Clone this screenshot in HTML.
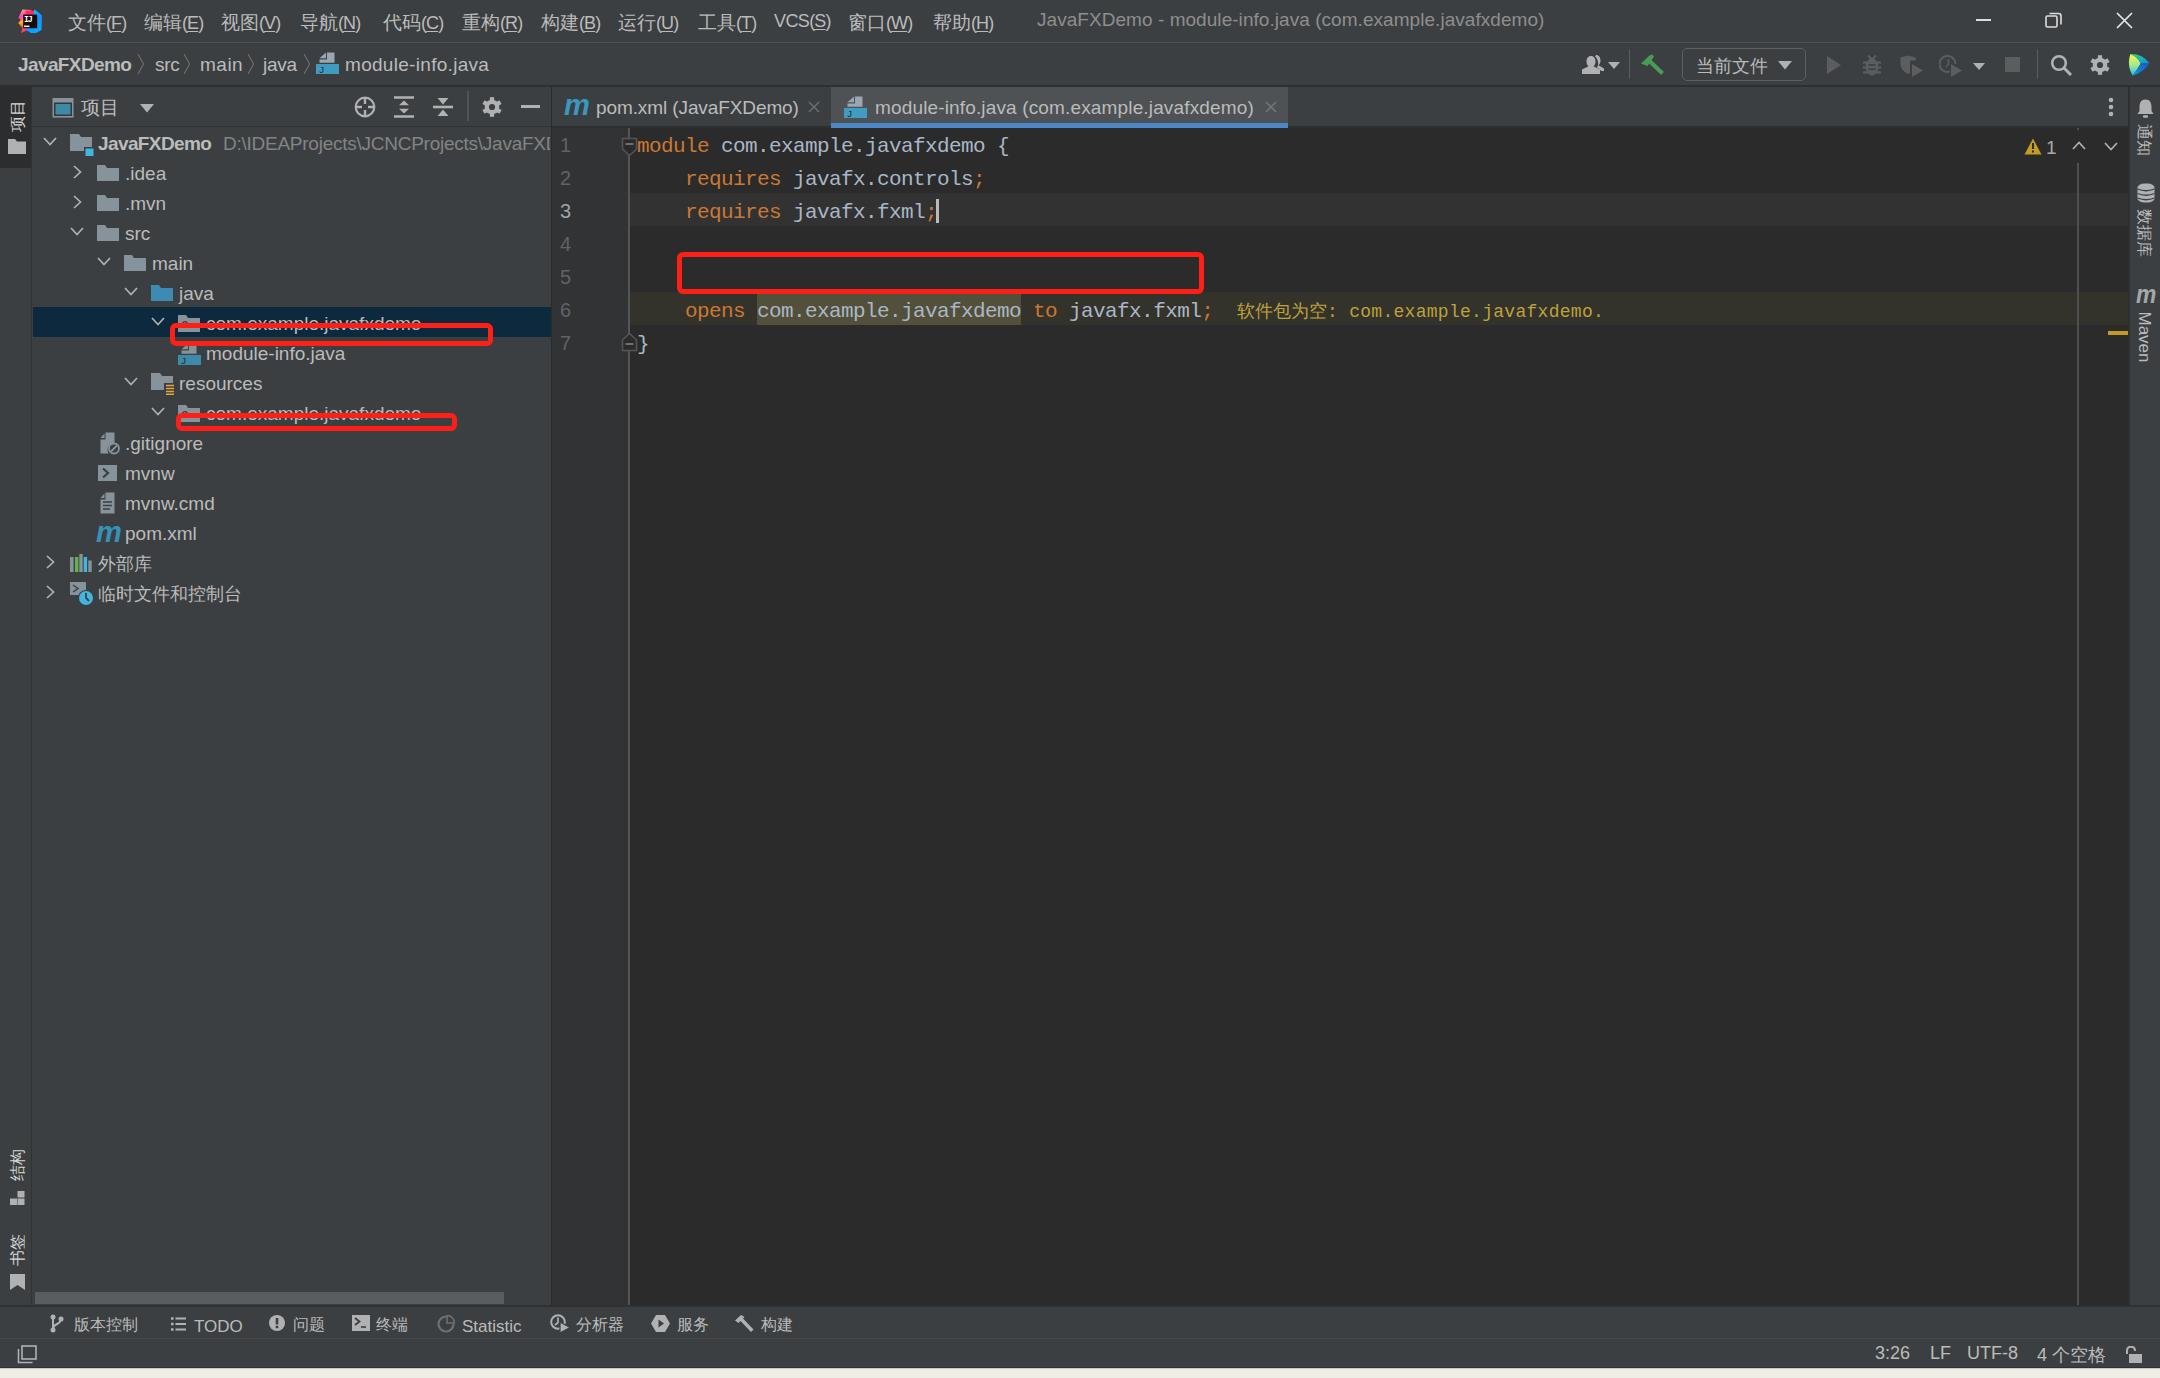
<!DOCTYPE html>
<html><head><meta charset="utf-8">
<style>
*{box-sizing:border-box;margin:0;padding:0}
html,body{width:2160px;height:1378px;overflow:hidden;background:#3c3f41;font-family:"Liberation Sans",sans-serif;color:#bbbbbb}
.a{position:absolute;white-space:nowrap}
svg{display:block}
.mono{font-family:"Liberation Mono",monospace}
#menubar{left:0;top:0;width:2160px;height:43px;background:#3c3f41;border-bottom:1px solid #515151}
#navbar{left:0;top:43px;width:2160px;height:42px;background:#3c3f41}
#sep1{left:0;top:85px;width:2160px;height:2px;background:#2e2f30;z-index:2}
#lstrip{left:0;top:86px;width:32px;height:1219px;background:#3c3f41;border-right:1px solid #323232}
#proj{left:32px;top:86px;width:519px;height:1219px;background:#3c3f41}
#vsep{left:551px;top:86px;width:1px;height:1219px;background:#2b2b2b}
#tabs{left:552px;top:86px;width:1576px;height:42px;background:#3c3f41;border-bottom:2px solid #2e2f30}
#gutter{left:552px;top:128px;width:78px;height:1177px;background:#313335}
#editor{left:630px;top:128px;width:1498px;height:1177px;background:#2b2b2b}
#rstrip{left:2128px;top:86px;width:32px;height:1219px;background:#3c3f41;border-left:2px solid #2e2f30}
#btbar{left:0;top:1305px;width:2160px;height:34px;background:#3c3f41;border-top:2px solid #303132;border-bottom:1px solid #46484a}
#status{left:0;top:1339px;width:2160px;height:29px;background:#3c3f41}
#beige{left:0;top:1367px;width:2160px;height:11px;background:#efeee5;border-top:1px solid #2e3031;box-shadow:inset 0 1px 0 #c9c8c0}
.menu span{position:absolute;top:10px;font-size:19px;color:#bbbbbb;white-space:nowrap}
.menu i{font-style:normal;letter-spacing:-0.9px;font-size:18px}
.menu u{text-decoration:underline;text-underline-offset:2px}
.tt{font-size:19px;color:#bbbbbb;line-height:22px;margin-top:1px}
.tab{font-size:19px;color:#bbbbbb;letter-spacing:-0.35px}
.ln{left:530px;width:41px;text-align:right;font-family:"Liberation Sans",sans-serif;font-size:20px;line-height:33px;color:#606366;margin-top:1px}
.code{margin-top:2px;left:637px;font-family:"Liberation Mono",monospace;font-size:21px;letter-spacing:-0.6px;line-height:33px;color:#a9b7c6;white-space:pre}
.kw{color:#cc7832}
.red{border:5px solid #fe1f17;border-radius:6px}
.vl span,.vr span{position:absolute;font-size:16px;color:#bbbbbb;white-space:nowrap;line-height:18px}
.vl span{transform:rotate(-90deg);color:#d6d6d6}
.vr span{transform:rotate(90deg)}
.bt{top:1315px;font-size:16px;color:#bbbbbb}
.st{top:1343px;font-size:18px;color:#bbbbbb}
</style></head><body>
<div id="menubar" class="a"></div>
<div id="navbar" class="a"></div>
<div id="sep1" class="a"></div>
<div id="lstrip" class="a"></div>
<div id="proj" class="a"></div>
<div id="vsep" class="a"></div>
<div id="tabs" class="a"></div>
<div id="gutter" class="a"></div>
<div id="editor" class="a"></div>
<div id="rstrip" class="a"></div>
<div id="btbar" class="a"></div>
<div id="status" class="a"></div>
<div id="beige" class="a"></div>
<!-- MENU BAR -->
<svg class="a" style="left:18px;top:9px" width="25" height="25" viewBox="0 0 25 25"><defs>
<linearGradient id="ijl" x1="0" y1="0" x2="0.3" y2="1"><stop offset="0" stop-color="#fdd03b"/><stop offset="0.35" stop-color="#ff3ec8"/><stop offset="0.55" stop-color="#ffb800"/><stop offset="0.75" stop-color="#ff5a3c"/><stop offset="1" stop-color="#ff2a8c"/></linearGradient>
<linearGradient id="ijr" x1="0" y1="0" x2="0.4" y2="1"><stop offset="0" stop-color="#00d8ff"/><stop offset="0.6" stop-color="#1a8cff"/><stop offset="1" stop-color="#08a6ff"/></linearGradient></defs>
<path d="M4.5 0.5 L13 1 L15 8 L10 21 L3 24 L4.5 19 L0.3 14 L3 10.5 L0.3 9 Z" fill="url(#ijl)"/>
<path d="M7.5 1.5 L16 1.8 L18 7 L8 8 Z" fill="#ff2a6a"/>
<path d="M16.5 0.2 L24 6.5 L23.5 21 L18 24 L13 24 L8 21 L15 7 Z" fill="url(#ijr)"/>
<rect x="5.2" y="5.4" width="14" height="13.8" rx="0.5" fill="#160b0b"/>
<text x="6" y="12.6" font-family="Liberation Mono" font-weight="bold" font-size="8.2" fill="#ffffff" letter-spacing="-1.2">IJ</text>
<rect x="6" y="16.5" width="5.5" height="1.6" fill="#e8e8e8"/></svg>
<div class="a menu">
<span style="left:68px">文件<i>(<u>F</u>)</i></span>
<span style="left:144px">编辑<i>(<u>E</u>)</i></span>
<span style="left:221px">视图<i>(<u>V</u>)</i></span>
<span style="left:300px">导航<i>(<u>N</u>)</i></span>
<span style="left:383px">代码<i>(<u>C</u>)</i></span>
<span style="left:462px">重构<i>(<u>R</u>)</i></span>
<span style="left:541px">构建<i>(<u>B</u>)</i></span>
<span style="left:618px">运行<i>(<u>U</u>)</i></span>
<span style="left:698px">工具<i>(<u>T</u>)</i></span>
<span style="left:774px;top:11px;font-size:18px;letter-spacing:-0.6px">VCS<i>(<u>S</u>)</i></span>
<span style="left:848px">窗口<i>(<u>W</u>)</i></span>
<span style="left:933px">帮助<i>(<u>H</u>)</i></span>
</div>
<div class="a" style="left:1037px;top:9px;font-size:19px;color:#8e8e8e;letter-spacing:0.05px">JavaFXDemo - module-info.java (com.example.javafxdemo)</div>
<!-- window controls -->
<div class="a" style="left:1976px;top:19px;width:15px;height:2px;background:#dcdcdc"></div>
<svg class="a" style="left:2045px;top:12px" width="18" height="17" viewBox="0 0 18 17"><rect x="1" y="4" width="11" height="11" rx="1.5" fill="none" stroke="#dcdcdc" stroke-width="1.6"/><path d="M4.5 1.5 H13.5 Q16 1.5 16 4 V12.5" fill="none" stroke="#dcdcdc" stroke-width="1.6"/></svg>
<svg class="a" style="left:2116px;top:12px" width="17" height="17" viewBox="0 0 17 17"><path d="M1 1 L16 16 M16 1 L1 16" stroke="#e6e6e6" stroke-width="1.7"/></svg>
<!-- NAV BAR / breadcrumbs -->
<div class="a" style="left:18px;top:54px;font-size:19px;font-weight:bold;color:#bbbbbb;letter-spacing:-0.6px">JavaFXDemo</div>
<svg class="a" style="left:137px;top:53px" width="8" height="22" viewBox="0 0 8 22"><path d="M1 1 L6.5 11 L1 21" fill="none" stroke="#6f6f6f" stroke-width="1.1"/></svg>
<div class="a" style="left:155px;top:54px;font-size:19px;color:#bbbbbb;letter-spacing:-0.3px">src</div>
<svg class="a" style="left:183px;top:53px" width="8" height="22" viewBox="0 0 8 22"><path d="M1 1 L6.5 11 L1 21" fill="none" stroke="#6f6f6f" stroke-width="1.1"/></svg>
<div class="a" style="left:200px;top:54px;font-size:19px;color:#bbbbbb;letter-spacing:0.5px">main</div>
<svg class="a" style="left:247px;top:53px" width="8" height="22" viewBox="0 0 8 22"><path d="M1 1 L6.5 11 L1 21" fill="none" stroke="#6f6f6f" stroke-width="1.1"/></svg>
<div class="a" style="left:263px;top:54px;font-size:19px;color:#bbbbbb;letter-spacing:-0.3px">java</div>
<svg class="a" style="left:303px;top:53px" width="8" height="22" viewBox="0 0 8 22"><path d="M1 1 L6.5 11 L1 21" fill="none" stroke="#6f6f6f" stroke-width="1.1"/></svg>
<svg class="a" style="left:315px;top:51px" width="24" height="24" viewBox="0 0 24 24"><path d="M12 1.4 H19.5 V11.8 H4.5 V8.5 H12 Z" fill="#9aa7b0"/><path d="M4.5 7.3 L11 1.6 V7.3 Z" fill="#9aa7b0"/><rect x="1" y="13" width="23" height="10" fill="#40a0c8" opacity="0.95"/><text x="4.2" y="21.8" font-family="Liberation Sans" font-size="9.5" fill="#1e2a30">J</text></svg>
<div class="a" style="left:345px;top:54px;font-size:19px;color:#bbbbbb;letter-spacing:0.3px">module-info.java</div>
<!-- toolbar right -->
<svg class="a" style="left:1581px;top:54px" width="24" height="21" viewBox="0 0 24 21"><path d="M10 2 C13 2 14.5 4.5 14.5 7.5 C14.5 10 13.5 11.5 12.5 12.3 L19 15.5 V20 H1 V15.5 L7.5 12.3 C6.5 11.5 5.5 10 5.5 7.5 C5.5 4.5 7 2 10 2 Z" fill="#afb1b3"/><path d="M15 1 C18 1 19.5 3.5 19.5 6.5 C19.5 9 18.5 10.5 17.5 11.3 L23 14.5 V17 H20.5 L16 13.5 C17 12 17.5 10.5 17 8 C16.5 5 15.5 3.5 14 2.5 Z" fill="#afb1b3"/></svg>
<svg class="a" style="left:1608px;top:62px" width="12" height="8" viewBox="0 0 12 8"><path d="M0 0 H12 L6 7 Z" fill="#afb1b3"/></svg>
<div class="a" style="left:1629px;top:49px;width:1px;height:30px;background:#5a5d5f"></div>
<svg class="a" style="left:1640px;top:54px" width="25" height="22" viewBox="0 0 25 22"><path d="M1 9.5 L9.5 1.5 L12.5 0.5 L14 2.5 L7.5 12 Z" fill="#499c54"/><path d="M9 6.5 L22.5 19.5" stroke="#499c54" stroke-width="4"/></svg>
<div class="a" style="left:1682px;top:48px;width:124px;height:33px;border:1.5px solid #5e6060;border-radius:5px;background:#3c3f41"></div>
<div class="a" style="left:1696px;top:54px;font-size:18px;color:#bbbbbb">当前文件</div>
<svg class="a" style="left:1778px;top:61px" width="14" height="9" viewBox="0 0 14 9"><path d="M0 0 H14 L7 8.5 Z" fill="#afb1b3"/></svg>
<svg class="a" style="left:1826px;top:56px" width="16" height="18" viewBox="0 0 16 18"><path d="M1 0 L15 9 L1 18 Z" fill="#5b5d5f"/></svg>
<svg class="a" style="left:1862px;top:54px" width="20" height="22" viewBox="0 0 20 22"><ellipse cx="10" cy="13" rx="6.5" ry="8.5" fill="#5b5d5f"/><rect x="1" y="7.5" width="18" height="2.2" fill="#5b5d5f"/><rect x="1" y="12.3" width="18" height="2.2" fill="#5b5d5f"/><rect x="1" y="17.3" width="18" height="2.2" fill="#5b5d5f"/><rect x="6.5" y="10.2" width="7" height="1.6" fill="#3c3f41"/><rect x="6.5" y="14.5" width="7" height="1.6" fill="#3c3f41"/><path d="M6 1.5 L10 5.5 L14 1.5" stroke="#5b5d5f" stroke-width="2" fill="none"/></svg>
<svg class="a" style="left:1900px;top:55px" width="24" height="23" viewBox="0 0 24 23"><path d="M0.5 2.5 L8 0.5 L15.5 2.5 V5.5 H10 V18 C9 18.5 8.5 18.8 8 19 C4 17 0.5 13.5 0.5 8.5 Z" fill="#5b5d5f"/><path d="M12 9 L23 15.5 L12 22 Z" fill="#5b5d5f"/></svg>
<svg class="a" style="left:1939px;top:54px" width="24" height="24" viewBox="0 0 24 24"><path d="M16.5 10 A8 8 0 1 0 11 17.5" fill="none" stroke="#5b5d5f" stroke-width="2"/><path d="M9.5 5 V10 L7 13" stroke="#5b5d5f" stroke-width="1.6" fill="none"/><path d="M12 10 L23 16.5 L12 23 Z" fill="#5b5d5f"/></svg>
<svg class="a" style="left:1973px;top:63px" width="12" height="8" viewBox="0 0 12 8"><path d="M0 0 H12 L6 7 Z" fill="#afb1b3"/></svg>
<div class="a" style="left:2005px;top:57px;width:15px;height:15px;background:#5b5d5f"></div>
<div class="a" style="left:2037px;top:49px;width:1px;height:30px;background:#5a5d5f"></div>
<svg class="a" style="left:2050px;top:54px" width="23" height="22" viewBox="0 0 23 22"><circle cx="9" cy="9" r="6.8" fill="none" stroke="#afb1b3" stroke-width="2.6"/><path d="M13.5 13.5 L21 21" stroke="#afb1b3" stroke-width="3"/></svg>
<svg class="a" style="left:2090px;top:55px" width="20" height="20" viewBox="0 0 20 20"><g fill="#afb1b3"><circle cx="10" cy="10" r="7.3"/><rect x="7.9" y="0.2" width="4.2" height="4" transform="rotate(0 10 10)"/><rect x="7.9" y="0.2" width="4.2" height="4" transform="rotate(60 10 10)"/><rect x="7.9" y="0.2" width="4.2" height="4" transform="rotate(120 10 10)"/><rect x="7.9" y="0.2" width="4.2" height="4" transform="rotate(180 10 10)"/><rect x="7.9" y="0.2" width="4.2" height="4" transform="rotate(240 10 10)"/><rect x="7.9" y="0.2" width="4.2" height="4" transform="rotate(300 10 10)"/></g><circle cx="10" cy="10" r="3.1" fill="#3c3f41"/></svg>
<svg class="a" style="left:2128px;top:53px" width="23" height="24" viewBox="0 0 23 24"><defs><linearGradient id="cw1" x1="0" y1="0" x2="0" y2="1"><stop offset="0" stop-color="#fcf84a"/><stop offset="0.5" stop-color="#a8e88a"/><stop offset="1" stop-color="#18c8f0"/></linearGradient><linearGradient id="cw2" x1="0" y1="0" x2="1" y2="1"><stop offset="0" stop-color="#2fe06a"/><stop offset="1" stop-color="#0b8af5"/></linearGradient><linearGradient id="cw3" x1="1" y1="0" x2="0" y2="1"><stop offset="0" stop-color="#1f4fb8"/><stop offset="1" stop-color="#0b9cf0"/></linearGradient></defs><path d="M2.4 1 Q10 4 12.7 10.4 Q9 17 4.6 22.6 Q-1.5 12 2.4 1 Z" fill="url(#cw1)"/><path d="M2.4 1 Q14 0.5 21.8 10.4 H12.7 Q10 4 2.4 1 Z" fill="url(#cw2)"/><path d="M12.7 10.4 H21.8 Q14 20 4.6 22.6 Q9 17 12.7 10.4 Z" fill="url(#cw3)"/></svg>
<!-- LEFT STRIP -->
<div class="a" style="left:0;top:86px;width:31px;height:82px;background:#2b2d2f"></div>
<div class="a vl" style="left:9px;top:101px;width:18px;height:31px"><span style="left:-7px;top:6px;">项目</span></div>
<svg class="a" style="left:8px;top:139px" width="18" height="15" viewBox="0 0 18 15"><path d="M0 0 H7 L9 2.5 H18 V15 H0 Z" fill="#afb1b3"/></svg>
<div class="a vl" style="left:9px;top:1150px;width:18px;height:32px"><span style="left:-7px;top:6px;">结构</span></div>
<svg class="a" style="left:10px;top:1191px" width="16" height="14" viewBox="0 0 16 14"><rect x="7.5" y="0" width="7" height="6.5" fill="#afb1b3"/><rect x="0" y="7.5" width="7" height="6.5" fill="#afb1b3"/><rect x="7.5" y="7.5" width="7" height="6.5" fill="#afb1b3"/></svg>
<div class="a vl" style="left:9px;top:1235px;width:18px;height:32px"><span style="left:-7px;top:6px;">书签</span></div>
<svg class="a" style="left:10px;top:1274px" width="15" height="16" viewBox="0 0 15 16"><path d="M0 0 H15 V16 L7.5 11 L0 16 Z" fill="#afb1b3"/></svg>

<!-- PROJECT HEADER -->
<div class="a" style="left:32px;top:126px;width:519px;height:1px;background:#323232"></div>
<svg class="a" style="left:52px;top:98px" width="22" height="20" viewBox="0 0 22 20"><rect x="0.5" y="0" width="21" height="19.6" fill="#87939a"/><rect x="2" y="4.5" width="18" height="13.5" fill="#34383a"/><rect x="3.5" y="6" width="15" height="10.5" fill="#3d8aa5"/></svg>
<div class="a" style="left:81px;top:95px;font-size:19px;color:#bbbbbb">项目</div>
<svg class="a" style="left:140px;top:104px" width="14" height="9" viewBox="0 0 14 9"><path d="M0 0 H14 L7 8.5 Z" fill="#afb1b3"/></svg>
<svg class="a" style="left:354px;top:96px" width="22" height="22" viewBox="0 0 22 22"><circle cx="11" cy="11" r="9.3" fill="none" stroke="#afb1b3" stroke-width="2.2"/><path d="M11 1 V8 M11 14 V21 M1 11 H8 M14 11 H21" stroke="#afb1b3" stroke-width="2.4"/></svg>
<svg class="a" style="left:394px;top:96px" width="20" height="22" viewBox="0 0 20 22"><path d="M0 1.5 H20 M0 20.5 H20" stroke="#afb1b3" stroke-width="2.6"/><path d="M10 4.5 L15 9.3 H5 Z M10 17.5 L15 12.7 H5 Z" fill="#afb1b3"/></svg>
<svg class="a" style="left:433px;top:96px" width="20" height="22" viewBox="0 0 20 22"><path d="M0 11 H20" stroke="#afb1b3" stroke-width="2.6"/><path d="M10 8.5 L15.5 2 H4.5 Z M10 13.5 L15.5 20 H4.5 Z" fill="#afb1b3"/></svg>
<div class="a" style="left:467px;top:91px;width:2px;height:30px;background:#515456"></div>
<svg class="a" style="left:482px;top:97px" width="20" height="20" viewBox="0 0 20 20"><g fill="#afb1b3"><circle cx="10" cy="10" r="7.3"/><rect x="7.9" y="0.2" width="4.2" height="4" transform="rotate(0 10 10)"/><rect x="7.9" y="0.2" width="4.2" height="4" transform="rotate(60 10 10)"/><rect x="7.9" y="0.2" width="4.2" height="4" transform="rotate(120 10 10)"/><rect x="7.9" y="0.2" width="4.2" height="4" transform="rotate(180 10 10)"/><rect x="7.9" y="0.2" width="4.2" height="4" transform="rotate(240 10 10)"/><rect x="7.9" y="0.2" width="4.2" height="4" transform="rotate(300 10 10)"/></g><circle cx="10" cy="10" r="3.1" fill="#3c3f41"/></svg>
<div class="a" style="left:521px;top:105px;width:19px;height:3px;background:#afb1b3"></div>

<!-- TREE -->
<div class="a" style="left:33px;top:307px;width:518px;height:30px;background:#0d293e"></div>

<div class="a" style="left:43px;top:137px"><svg width="14" height="9" viewBox="0 0 14 9"><path d="M1 1 L7 7.5 L13 1" fill="none" stroke="#afb1b3" stroke-width="1.7"/></svg></div>
<div class="a" style="left:70px;top:134px;line-height:0"><svg width="24" height="22" viewBox="0 0 24 22"><path d="M0 0 H9 L11 3 H22 V17 H0 Z" fill="#87939a"/><rect x="14" y="13" width="9" height="9" fill="#3c3f41"/><rect x="15.5" y="14.5" width="8" height="8" fill="#40b6e0"/></svg></div>
<div class="a tt" style="left:98px;top:132px;font-weight:bold;letter-spacing:-0.6px">JavaFXDemo</div>
<div class="a tt" style="left:223px;top:132px;color:#848484;letter-spacing:-0.25px;width:327px;overflow:hidden">D:\IDEAProjects\JCNCProjects\JavaFXDemo</div>
<div class="a" style="left:73px;top:165px"><svg width="9" height="14" viewBox="0 0 9 14"><path d="M1 1 L7.5 7 L1 13" fill="none" stroke="#afb1b3" stroke-width="1.7"/></svg></div>
<div class="a" style="left:97px;top:165px;line-height:0"><svg width="22" height="18" viewBox="0 0 22 18"><path d="M0 0 H8 L10 3 H22 V16 H0 Z" fill="#87939a"/></svg></div>
<div class="a tt" style="left:125px;top:162px;">.idea</div>
<div class="a" style="left:73px;top:195px"><svg width="9" height="14" viewBox="0 0 9 14"><path d="M1 1 L7.5 7 L1 13" fill="none" stroke="#afb1b3" stroke-width="1.7"/></svg></div>
<div class="a" style="left:97px;top:195px;line-height:0"><svg width="22" height="18" viewBox="0 0 22 18"><path d="M0 0 H8 L10 3 H22 V16 H0 Z" fill="#87939a"/></svg></div>
<div class="a tt" style="left:125px;top:192px;">.mvn</div>
<div class="a" style="left:70px;top:227px"><svg width="14" height="9" viewBox="0 0 14 9"><path d="M1 1 L7 7.5 L13 1" fill="none" stroke="#afb1b3" stroke-width="1.7"/></svg></div>
<div class="a" style="left:97px;top:225px;line-height:0"><svg width="22" height="18" viewBox="0 0 22 18"><path d="M0 0 H8 L10 3 H22 V16 H0 Z" fill="#87939a"/></svg></div>
<div class="a tt" style="left:125px;top:222px;">src</div>
<div class="a" style="left:97px;top:257px"><svg width="14" height="9" viewBox="0 0 14 9"><path d="M1 1 L7 7.5 L13 1" fill="none" stroke="#afb1b3" stroke-width="1.7"/></svg></div>
<div class="a" style="left:124px;top:255px;line-height:0"><svg width="22" height="18" viewBox="0 0 22 18"><path d="M0 0 H8 L10 3 H22 V16 H0 Z" fill="#87939a"/></svg></div>
<div class="a tt" style="left:152px;top:252px;">main</div>
<div class="a" style="left:124px;top:287px"><svg width="14" height="9" viewBox="0 0 14 9"><path d="M1 1 L7 7.5 L13 1" fill="none" stroke="#afb1b3" stroke-width="1.7"/></svg></div>
<div class="a" style="left:151px;top:285px;line-height:0"><svg width="22" height="18" viewBox="0 0 22 18"><path d="M0 0 H8 L10 3 H22 V16 H0 Z" fill="#3b8bb3"/></svg></div>
<div class="a tt" style="left:179px;top:282px;">java</div>
<div class="a" style="left:151px;top:317px"><svg width="14" height="9" viewBox="0 0 14 9"><path d="M1 1 L7 7.5 L13 1" fill="none" stroke="#afb1b3" stroke-width="1.7"/></svg></div>
<div class="a" style="left:178px;top:315px;line-height:0"><svg width="22" height="18" viewBox="0 0 22 18"><path d="M0 0 H8 L10 3 H22 V17 H0 Z" fill="#87939a"/><circle cx="7" cy="9" r="3" fill="#3c3f41"/><circle cx="7" cy="9" r="1.8" fill="#87939a"/></svg></div>
<div class="a tt" style="left:206px;top:312px;">com.example.javafxdemo</div>
<div class="a" style="left:177px;top:342px;line-height:0"><svg width="24" height="24" viewBox="0 0 24 24"><path d="M12 1.4 H19.5 V11.8 H4.5 V8.5 H12 Z" fill="#87939a"/><path d="M4.5 7.3 L11 1.6 V7.3 Z" fill="#87939a"/><rect x="1" y="13" width="23" height="10" fill="#3e8eb0" opacity="0.95"/><text x="4.2" y="21.8" font-family="Liberation Sans" font-size="9.5" fill="#1e2a30">J</text></svg></div>
<div class="a tt" style="left:206px;top:342px;">module-info.java</div>
<div class="a" style="left:124px;top:377px"><svg width="14" height="9" viewBox="0 0 14 9"><path d="M1 1 L7 7.5 L13 1" fill="none" stroke="#afb1b3" stroke-width="1.7"/></svg></div>
<div class="a" style="left:151px;top:373px;line-height:0"><svg width="24" height="22" viewBox="0 0 24 22"><path d="M0 0 H9 L11 3 H22 V17 H0 Z" fill="#87939a"/><rect x="13" y="10" width="11" height="12" fill="#3c3f41"/><path d="M15 12.5 H23 M15 15.5 H23 M15 18.5 H23 M15 21.2 H23" stroke="#e8a33e" stroke-width="1.6"/></svg></div>
<div class="a tt" style="left:179px;top:372px;">resources</div>
<div class="a" style="left:151px;top:407px"><svg width="14" height="9" viewBox="0 0 14 9"><path d="M1 1 L7 7.5 L13 1" fill="none" stroke="#afb1b3" stroke-width="1.7"/></svg></div>
<div class="a" style="left:178px;top:405px;line-height:0"><svg width="22" height="18" viewBox="0 0 22 18"><path d="M0 0 H8 L10 3 H22 V17 H0 Z" fill="#87939a"/><circle cx="7" cy="9" r="3" fill="#3c3f41"/><circle cx="7" cy="9" r="1.8" fill="#87939a"/></svg></div>
<div class="a tt" style="left:206px;top:402px;">com.example.javafxdemo</div>
<div class="a" style="left:99px;top:432px;line-height:0"><svg width="22" height="24" viewBox="0 0 22 24"><path d="M6.5 0.5 H15.5 V11 A7 7 0 0 0 9.5 21.5 H1.5 V7.5 H6.5 Z" fill="#87939a"/><path d="M1.5 6 L5.5 1.5 V6 Z" fill="#87939a"/><circle cx="15" cy="16.5" r="5" fill="none" stroke="#87939a" stroke-width="1.8"/><path d="M12 19.5 L18 13.5" stroke="#87939a" stroke-width="1.8"/></svg></div>
<div class="a tt" style="left:125px;top:432px;">.gitignore</div>
<div class="a" style="left:98px;top:464px;line-height:0"><svg width="20" height="18" viewBox="0 0 20 18"><rect x="0" y="1" width="19" height="16" fill="#87939a"/><path d="M5 4.5 L10 9 L5 13.5" fill="none" stroke="#3c3f41" stroke-width="2.2"/></svg></div>
<div class="a tt" style="left:125px;top:462px;">mvnw</div>
<div class="a" style="left:99px;top:492px;line-height:0"><svg width="20" height="24" viewBox="0 0 20 24"><path d="M6.5 0.5 H15.5 V21.5 H1.5 V7.5 H6.5 Z" fill="#87939a"/><path d="M1.5 6 L5.5 1.5 V6 Z" fill="#87939a"/><path d="M4 10 H13 M4 13.5 H13 M4 17 H11" stroke="#3c3f41" stroke-width="1.5"/></svg></div>
<div class="a tt" style="left:125px;top:492px;">mvnw.cmd</div>
<div class="a" style="left:95px;top:524px;line-height:0"><svg width="27" height="20" viewBox="0 0 27 20"><text x="1" y="17.6" transform="scale(0.97,1)" font-family="Liberation Sans" font-weight="bold" font-style="italic" font-size="30" fill="#3592b8">m</text></svg></div>
<div class="a tt" style="left:125px;top:522px;">pom.xml</div>
<div class="a" style="left:46px;top:555px"><svg width="9" height="14" viewBox="0 0 9 14"><path d="M1 1 L7.5 7 L1 13" fill="none" stroke="#afb1b3" stroke-width="1.7"/></svg></div>
<div class="a" style="left:70px;top:553px;line-height:0"><svg width="23" height="20" viewBox="0 0 23 20"><rect x="0" y="4" width="3.6" height="15" fill="#87939a"/><rect x="5" y="4" width="3.4" height="15" fill="#62b543"/><rect x="9.3" y="1" width="3.4" height="18" fill="#87939a"/><rect x="13.7" y="4" width="3.4" height="15" fill="#40b6e0"/><rect x="18.3" y="7.5" width="3.4" height="11.5" fill="#87939a"/></svg></div>
<div class="a tt" style="left:98px;top:552px;font-size:18px;">外部库</div>
<div class="a" style="left:46px;top:585px"><svg width="9" height="14" viewBox="0 0 9 14"><path d="M1 1 L7.5 7 L1 13" fill="none" stroke="#afb1b3" stroke-width="1.7"/></svg></div>
<div class="a" style="left:70px;top:582px;line-height:0"><svg width="24" height="24" viewBox="0 0 24 24"><rect x="0" y="0" width="16" height="13" fill="#87939a"/><path d="M3 3 L8 6.5 L3 10" fill="none" stroke="#3c3f41" stroke-width="1.5"/><circle cx="16" cy="16" r="8" fill="#3c3f41"/><circle cx="16" cy="16" r="7" fill="#40b6e0"/><path d="M16 11 V16 L19 19" stroke="#3c3f41" stroke-width="1.8" fill="none"/></svg></div>
<div class="a tt" style="left:98px;top:582px;font-size:18px;">临时文件和控制台</div><!-- TABS -->
<svg class="a" style="left:563px;top:97px" width="27" height="20" viewBox="0 0 27 20"><text x="1" y="17.6" transform="scale(0.97,1)" font-family="Liberation Sans" font-weight="bold" font-style="italic" font-size="30" fill="#3a97c0">m</text></svg>
<div class="a tab" style="left:596px;top:97px;letter-spacing:-0.1px">pom.xml (JavaFXDemo)</div>
<svg class="a" style="left:808px;top:101px" width="12" height="12" viewBox="0 0 12 12"><path d="M1 1 L11 11 M11 1 L1 11" stroke="#6b6e70" stroke-width="1.5"/></svg>
<div class="a" style="left:831px;top:87px;width:457px;height:39px;background:#4e5254"></div>
<div class="a" style="left:831px;top:123px;width:457px;height:5px;background:#4a88c7"></div>
<svg class="a" style="left:843px;top:95px" width="24" height="24" viewBox="0 0 24 24"><path d="M12 1.4 H19.5 V11.8 H4.5 V8.5 H12 Z" fill="#9aa7b0"/><path d="M4.5 7.3 L11 1.6 V7.3 Z" fill="#9aa7b0"/><rect x="1" y="13" width="23" height="10" fill="#40a0c8" opacity="0.95"/><text x="4.2" y="21.8" font-family="Liberation Sans" font-size="9.5" fill="#1e2a30">J</text></svg>
<div class="a tab" style="left:875px;top:97px;letter-spacing:0.15px">module-info.java (com.example.javafxdemo)</div>
<svg class="a" style="left:1265px;top:101px" width="12" height="12" viewBox="0 0 12 12"><path d="M1 1 L11 11 M11 1 L1 11" stroke="#75787a" stroke-width="1.5"/></svg>
<svg class="a" style="left:2107px;top:97px" width="8" height="20" viewBox="0 0 8 20"><circle cx="4" cy="3" r="2.3" fill="#afb1b3"/><circle cx="4" cy="10" r="2.3" fill="#afb1b3"/><circle cx="4" cy="17" r="2.3" fill="#afb1b3"/></svg>

<!-- EDITOR -->
<div class="a" style="left:630px;top:193px;width:1498px;height:33px;background:#323232"></div>
<div class="a" style="left:630px;top:292px;width:1498px;height:33px;background:#33322b"></div>
<div class="a" style="left:757px;top:292px;width:264px;height:33px;background:#52503a"></div>
<div class="a" style="left:628px;top:128px;width:2px;height:1177px;background:#555555"></div>
<svg class="a" style="left:621px;top:137px" width="17" height="20" viewBox="0 0 17 20"><path d="M1.5 1.5 H15.5 V12 L8.5 18.5 L1.5 12 Z" fill="#2b2b2b" stroke="#555" stroke-width="1.6"/><path d="M4.5 7 H12.5" stroke="#777" stroke-width="1.8"/></svg>
<svg class="a" style="left:621px;top:332px" width="17" height="20" viewBox="0 0 17 20"><path d="M1.5 18.5 H15.5 V8 L8.5 1.5 L1.5 8 Z" fill="#2b2b2b" stroke="#555" stroke-width="1.6"/><path d="M4.5 12 H12.5" stroke="#777" stroke-width="1.8"/></svg>
<div class="a" style="left:2077px;top:128px;width:2px;height:1177px;background:#4f4f4f"></div>
<div class="a ln" style="top:128px">1</div>
<div class="a ln" style="top:161px">2</div>
<div class="a ln" style="top:194px;color:#a4a3a3">3</div>
<div class="a ln" style="top:227px">4</div>
<div class="a ln" style="top:260px">5</div>
<div class="a ln" style="top:293px">6</div>
<div class="a ln" style="top:326px">7</div>
<div class="a code" style="top:128px"><span class="kw">module</span> com.example.javafxdemo {</div>
<div class="a code" style="top:161px">    <span class="kw">requires</span> javafx.controls<span class="kw">;</span></div>
<div class="a code" style="top:194px">    <span class="kw">requires</span> javafx.fxml<span class="kw">;</span></div>
<div class="a" style="left:936px;top:199px;width:3px;height:24px;background:#bbbbbb"></div>
<div class="a code" style="top:293px">    <span class="kw">opens</span> com.example.javafxdemo <span class="kw">to</span> javafx.fxml<span class="kw">;</span></div>
<div class="a" style="left:1237px;top:295px;height:33px;line-height:33px;font-size:18px;color:#bea23a;font-family:'Liberation Sans',sans-serif;font-weight:300">软件包为空<span class="mono" style="font-size:18px;letter-spacing:0.28px">: com.example.javafxdemo.</span></div>
<div class="a code" style="top:326px">}</div>
<!-- warning widget -->
<div class="a" style="left:2018px;top:130px;width:108px;height:33px;background:#2b2b2b"></div>
<svg class="a" style="left:2024px;top:138px" width="18" height="17" viewBox="0 0 18 17"><path d="M9 0.5 L17.5 16.5 H0.5 Z" fill="#c39b26"/><rect x="8" y="5" width="2" height="6" fill="#2b2b2b"/><rect x="8" y="12.5" width="2" height="2" fill="#2b2b2b"/></svg>
<div class="a" style="left:2046px;top:137px;font-size:19px;color:#a9a9a9">1</div>
<svg class="a" style="left:2072px;top:141px" width="14" height="9" viewBox="0 0 14 9"><path d="M1 8 L7 1.5 L13 8" fill="none" stroke="#afb1b3" stroke-width="1.7"/></svg>
<svg class="a" style="left:2104px;top:142px" width="14" height="9" viewBox="0 0 14 9"><path d="M1 1 L7 7.5 L13 1" fill="none" stroke="#afb1b3" stroke-width="1.7"/></svg>
<div class="a" style="left:2108px;top:331px;width:20px;height:4px;background:#c39b26"></div>

<!-- RED ANNOTATIONS -->
<div class="a red" style="left:170px;top:323px;width:323px;height:23px"></div>
<div class="a red" style="left:176px;top:413px;width:281px;height:18px"></div>
<div class="a red" style="left:677px;top:252px;width:527px;height:42px"></div>

<!-- RIGHT STRIP -->
<svg class="a" style="left:2137px;top:99px" width="17" height="19" viewBox="0 0 17 19"><path d="M8.5 0.5 C13 0.5 14.5 4 14.5 8 V12 L16.5 15 H0.5 L2.5 12 V8 C2.5 4 4 0.5 8.5 0.5 Z" fill="#afb1b3"/><rect x="6" y="16.3" width="5" height="2.5" rx="1" fill="#afb1b3"/></svg>
<div class="a vr" style="left:2135px;top:124px;width:18px;height:33px"><span style="left:-7px;top:7px">通知</span></div>
<svg class="a" style="left:2137px;top:183px" width="18" height="20" viewBox="0 0 18 20"><rect x="0.5" y="0.5" width="17" height="19" rx="7" ry="4" fill="#afb1b3"/><path d="M0.5 6 Q9 9.5 17.5 6 M0.5 10.5 Q9 14 17.5 10.5 M0.5 15 Q9 18.5 17.5 15" fill="none" stroke="#3c3f41" stroke-width="1.3"/></svg>
<div class="a vr" style="left:2135px;top:209px;width:18px;height:49px"><span style="left:-15px;top:15px">数据库</span></div>
<svg class="a" style="left:2135px;top:287px" width="22" height="18" viewBox="0 0 22 18"><text x="1" y="15.8" transform="scale(0.88,1)" font-family="Liberation Sans" font-weight="bold" font-style="italic" font-size="26" fill="#a5a7a9">m</text></svg>
<div class="a vr" style="left:2135px;top:312px;width:17px;height:51px"><span style="left:-17px;top:16px;font-size:17px">Maven</span></div>
<!-- BOTTOM TOOLBAR -->
<div class="a" style="left:35px;top:1292px;width:469px;height:12px;background:#5a5d5f"></div>
<svg class="a" style="left:50px;top:1314px" width="14" height="19" viewBox="0 0 14 19"><circle cx="3" cy="3" r="2.5" fill="#afb1b3"/><circle cx="3" cy="16" r="2.5" fill="#afb1b3"/><circle cx="11" cy="5" r="2.5" fill="#afb1b3"/><path d="M3 3 V16 M11 5 C11 11 3 9 3 15" stroke="#afb1b3" stroke-width="2" fill="none"/></svg>
<div class="a bt" style="left:74px">版本控制</div>
<svg class="a" style="left:171px;top:1317px" width="15" height="14" viewBox="0 0 15 14"><path d="M0 1.5 H2.5 M0 7 H2.5 M0 12.5 H2.5" stroke="#afb1b3" stroke-width="2.6"/><path d="M4.5 1.5 H15 M4.5 7 H15 M4.5 12.5 H15" stroke="#afb1b3" stroke-width="2.2"/></svg>
<div class="a bt" style="left:194px;top:1317px;font-size:17px">TODO</div>
<svg class="a" style="left:269px;top:1315px" width="16" height="16" viewBox="0 0 16 16"><circle cx="8" cy="8" r="8" fill="#afb1b3"/><rect x="6.7" y="3" width="2.6" height="6.5" fill="#3c3f41"/><rect x="6.7" y="10.8" width="2.6" height="2.4" fill="#3c3f41"/></svg>
<div class="a bt" style="left:293px">问题</div>
<svg class="a" style="left:352px;top:1315px" width="18" height="16" viewBox="0 0 18 16"><rect x="0" y="0" width="18" height="16" fill="#afb1b3"/><path d="M3 3 L7.5 6.5 L3 10" fill="none" stroke="#3c3f41" stroke-width="1.8"/><path d="M9 12 H14" stroke="#3c3f41" stroke-width="1.6"/></svg>
<div class="a bt" style="left:376px">终端</div>
<svg class="a" style="left:437px;top:1315px" width="18" height="18" viewBox="0 0 18 18"><path d="M9 1.5 A7.5 7.5 0 1 0 16.5 9" fill="none" stroke="#6e7072" stroke-width="2.2"/><path d="M10 0.5 A7.5 7.5 0 0 1 17.5 8 H10 Z" fill="none" stroke="#6e7072" stroke-width="1.6"/></svg>
<div class="a bt" style="left:462px;top:1317px;font-size:17px">Statistic</div>
<svg class="a" style="left:550px;top:1314px" width="20" height="19" viewBox="0 0 20 19"><circle cx="8" cy="8" r="6.8" fill="none" stroke="#afb1b3" stroke-width="2"/><path d="M8 3.5 V8.5 L5 11" stroke="#afb1b3" stroke-width="1.7" fill="none"/><path d="M10 8 L20 13.5 L10 19 Z" fill="#afb1b3" stroke="#3c3f41" stroke-width="1.2"/></svg>
<div class="a bt" style="left:576px">分析器</div>
<svg class="a" style="left:651px;top:1315px" width="19" height="17" viewBox="0 0 19 17"><path d="M5 0 H14 L19 8.5 L14 17 H5 L0 8.5 Z" fill="#afb1b3"/><path d="M7.5 4.5 L13 8.5 L7.5 12.5 Z" fill="#3c3f41"/></svg>
<div class="a bt" style="left:677px">服务</div>
<svg class="a" style="left:735px;top:1315px" width="19" height="17" viewBox="0 0 19 17"><path d="M0 5.5 L6 0 L9.5 2 L8 3.5 L18.5 14.5 L16 17 L5.5 6 L3.5 8 Z" fill="#afb1b3"/></svg>
<div class="a bt" style="left:761px">构建</div>
<!-- STATUS BAR -->
<svg class="a" style="left:17px;top:1345px" width="20" height="19" viewBox="0 0 20 19"><rect x="5" y="1" width="14" height="13" fill="none" stroke="#afb1b3" stroke-width="1.6"/><path d="M1.5 4 V17.5 H15.5" fill="none" stroke="#afb1b3" stroke-width="1.6"/></svg>
<div class="a st" style="left:1875px">3:26</div>
<div class="a st" style="left:1930px">LF</div>
<div class="a st" style="left:1967px">UTF-8</div>
<div class="a st" style="left:2037px">4 个空格</div>
<svg class="a" style="left:2124px;top:1346px" width="18" height="17" viewBox="0 0 18 17"><path d="M3 8 V5 C3 2 5 0.8 7 0.8 C9 0.8 11 2 11 5" fill="none" stroke="#afb1b3" stroke-width="2"/><rect x="5" y="8" width="13" height="9" fill="#afb1b3"/></svg>
</body></html>
